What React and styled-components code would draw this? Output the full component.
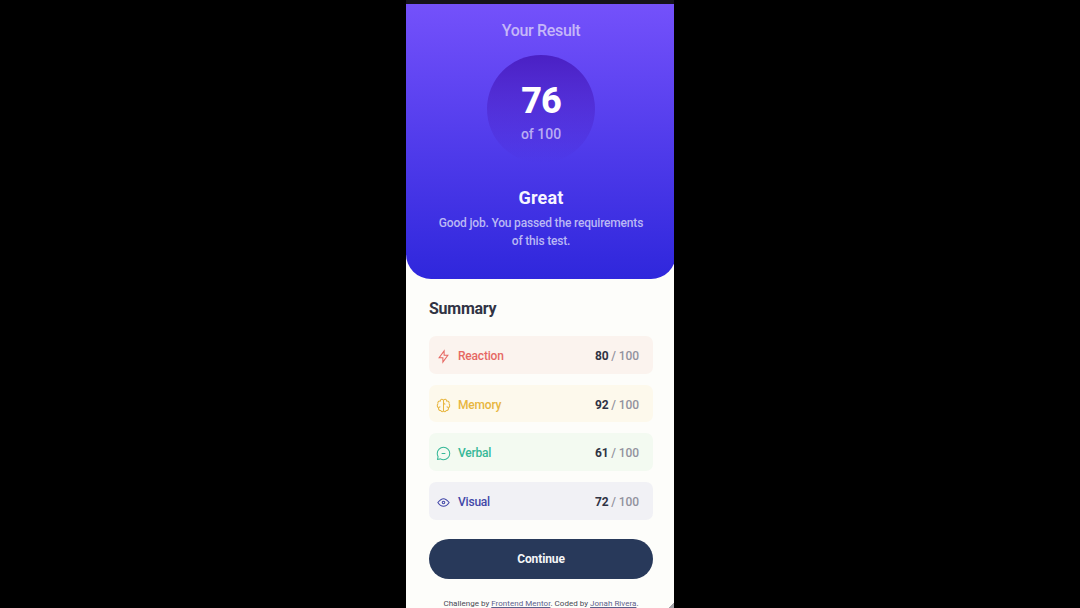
import React from "react";
import styled, { createGlobalStyle } from "styled-components";

const GlobalStyle = createGlobalStyle`
  * { box-sizing: border-box; }
  body {
    margin: 0;
    background: #000;
    font-family: Roboto, "Liberation Sans", sans-serif;
    -webkit-font-smoothing: antialiased;
  }
  h1, h2, h3, p, ul { margin: 0; padding: 0; }
`;

const Stage = styled.div`
  height: 608px;
  display: flex;
  justify-content: center;
  overflow: hidden;
  background: #000;
`;

const Screen = styled.main`
  position: relative;
  width: 268px;
  height: 608px;
  overflow: hidden;
  border-top: 4px solid #15131c;
  background: #fdfdfa;
`;

const ResizeGrip = styled.span`
  position: absolute;
  right: 0;
  bottom: 0;
  width: 6px;
  height: 6px;
  background: linear-gradient(135deg, transparent 50%, #a3a3a8 50%);
`;

const Page = styled.div`
  width: 270px;
  display: flex;
  flex-direction: column;
`;

const ResultPanel = styled.section`
  height: 275px;
  padding-top: 17px;
  display: flex;
  flex-direction: column;
  align-items: center;
  text-align: center;
  border-radius: 0 0 25px 25px;
  background: linear-gradient(#7451fb, #2f27dc);
`;

const ResultTitle = styled.h1`
  font-size: 16px;
  line-height: 20px;
  font-weight: 500;
  letter-spacing: -0.33px;
  color: #c5b7f8;
`;

const ScoreCircle = styled.div`
  width: 108px;
  height: 108px;
  margin-top: 14px;
  padding-top: 26px;
  border-radius: 50%;
  display: flex;
  flex-direction: column;
  align-items: center;
  background: linear-gradient(#4a20c4, rgba(60, 40, 205, 0));
`;

const Score = styled.strong`
  font-size: 36px;
  line-height: 40px;
  font-weight: 800;
  letter-spacing: -1px;
  color: #fff;
`;

const ScoreTotal = styled.span`
  margin-top: 4px;
  font-size: 14px;
  line-height: 18px;
  font-weight: 500;
  color: #b9acf3;
`;

const Grade = styled.h2`
  margin-top: 23px;
  font-size: 18px;
  line-height: 24px;
  font-weight: 700;
  letter-spacing: 0.2px;
  color: #f7f5ff;
`;

const Message = styled.p`
  width: 210px;
  margin-top: 4px;
  font-size: 12px;
  line-height: 18px;
  letter-spacing: -0.18px;
  font-weight: 500;
  color: #bab8f4;
`;

const Summary = styled.section`
  padding: 19px 23px 0;
`;

const SummaryTitle = styled.h2`
  font-size: 16px;
  line-height: 22px;
  font-weight: 700;
  letter-spacing: -0.25px;
  color: #303344;
`;

const Rows = styled.ul`
  margin-top: 16px;
  display: flex;
  flex-direction: column;
  gap: 11px;
  list-style: none;
`;

const Row = styled.li`
  height: 37.7px;
  padding: 2px 14px 0 7px;
  display: flex;
  align-items: center;
  border-radius: 7px;
  color: ${(p) => p.$color};
  background: ${(p) => p.$tint};
  font-size: 12px;
  line-height: 16px;
`;

const Icon = styled.svg`
  width: 15px;
  height: 15px;
  margin: 1px 7px 0 0;
  fill: none;
  stroke: currentColor;
  stroke-width: 1.4;
`;

const Category = styled.span`
  flex: 1;
  font-weight: 500;
  letter-spacing: -0.2px;
`;

const Points = styled.b`
  font-weight: 700;
  letter-spacing: -0.2px;
  color: #303344;
`;

const OutOf = styled.span`
  margin-left: 3px;
  font-weight: 500;
  letter-spacing: -0.1px;
  color: #92929e;
`;

const ContinueButton = styled.button`
  display: block;
  width: 224px;
  height: 40px;
  margin-top: 19px;
  padding: 1px 0 0;
  border: 0;
  border-radius: 20px;
  background: #28395a;
  color: #f5f6f8;
  font: 700 12px/16px Roboto, "Liberation Sans", sans-serif;
  letter-spacing: -0.1px;
`;

const Attribution = styled.footer`
  margin-top: 19px;
  font-size: 8px;
  line-height: 11px;
  letter-spacing: 0.03px;
  text-align: center;
  white-space: nowrap;
  color: #484953;
`;

const Link = styled.a`
  color: #5c608a;
  text-decoration: underline;
`;

const categories = [
  {
    name: "Reaction", score: 80, color: "#e66863", tint: "#fbf3ee",
    paths: ["M10.833 8.333V2.5l-6.666 9.167h5V17.5l6.666-9.167h-5Z"],
  },
  {
    name: "Memory", score: 92, color: "#e8b640", tint: "#fdf9ec",
    paths: [
      "M5.833 11.667a2.5 2.5 0 1 0 .834 4.858",
      "M3.553 13.004a3.333 3.333 0 0 1-.728-5.53m.025-.067a2.083 2.083 0 0 1 2.983-2.824m.199.054A2.083 2.083 0 1 1 10 3.75v12.917a1.667 1.667 0 0 1-3.333 0M10 5.833a2.5 2.5 0 0 0 2.5 2.5m1.667 3.334a2.5 2.5 0 1 1-.834 4.858",
      "M16.447 13.004a3.334 3.334 0 0 0 .728-5.53m-.025-.067a2.083 2.083 0 0 0-2.983-2.824M10 3.75a2.085 2.085 0 0 1 2.538-2.033 2.084 2.084 0 0 1 1.43 2.92m-.635 12.03a1.667 1.667 0 0 1-3.333 0",
    ],
  },
  {
    name: "Verbal", score: 61, color: "#36b898", tint: "#f3faf1",
    paths: ["M7.5 10h5M10 18.333A8.333 8.333 0 1 0 1.667 10c0 1.518.406 2.942 1.115 4.167l-.699 3.75 3.75-.699A8.295 8.295 0 0 0 10 18.333Z"],
  },
  {
    name: "Visual", score: 72, color: "#4247a8", tint: "#f1f1f5",
    paths: [
      "M10 11.667a1.667 1.667 0 1 0 0-3.334 1.667 1.667 0 0 0 0 3.334Z",
      "M17.5 10c-1.574 2.492-4.402 5-7.5 5s-5.926-2.508-7.5-5C4.416 7.632 6.66 5 10 5s5.584 2.632 7.5 5Z",
    ],
  },
];

export default function App() {
  return (
    <Stage>
      <GlobalStyle />
      <Screen>
        <Page>
          <ResultPanel>
            <ResultTitle>Your Result</ResultTitle>
            <ScoreCircle>
              <Score>76</Score>
              <ScoreTotal>of 100</ScoreTotal>
            </ScoreCircle>
            <Grade>Great</Grade>
            <Message>Good job. You passed the requirements of this test.</Message>
          </ResultPanel>
          <Summary>
            <SummaryTitle>Summary</SummaryTitle>
            <Rows>
              {categories.map((c) => (
                <Row key={c.name} $color={c.color} $tint={c.tint}>
                  <Icon viewBox="0 0 20 20">
                    {c.paths.map((d) => <path key={d} d={d} />)}
                  </Icon>
                  <Category>{c.name}</Category>
                  <Points>{c.score}</Points>
                  <OutOf>/ 100</OutOf>
                </Row>
              ))}
            </Rows>
            <ContinueButton>Continue</ContinueButton>
            <Attribution>
              Challenge by <Link>Frontend Mentor</Link>. Coded by <Link>Jonah Rivera</Link>.
            </Attribution>
          </Summary>
        </Page>
        <ResizeGrip />
      </Screen>
    </Stage>
  );
}
